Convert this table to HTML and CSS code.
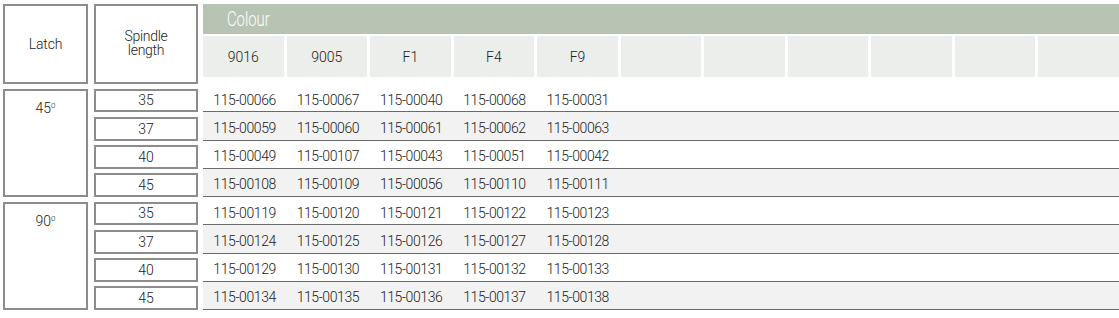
FILE: index.html
```html
<!DOCTYPE html>
<html lang="en">
<head>
<meta charset="utf-8">
<title>Latch spindle colours</title>
<link rel="stylesheet" href="styles.css">
</head>
<body>
<div class="table">
  <div class="box hd-latch">Latch</div>
  <div class="box hd-spindle">Spindle<br>length</div>
  <div class="hd-colour">
    <div class="colour-title"><span class="colour-label">Colour</span></div>
    <div class="colour-cells">
      <div class="cc">9016</div><div class="cc">9005</div><div class="cc">F1</div><div class="cc">F4</div><div class="cc">F9</div>
      <div class="cc"></div><div class="cc"></div><div class="cc"></div><div class="cc"></div><div class="cc"></div><div class="cc"></div>
    </div>
  </div>

  <div class="box latch g1">45<sup>0</sup></div>
  <div class="box spindle">35</div>
  <div class="drow"><span>115-00066</span><span>115-00067</span><span>115-00040</span><span>115-00068</span><span>115-00031</span></div>
  <div class="box spindle">37</div>
  <div class="drow alt"><span>115-00059</span><span>115-00060</span><span>115-00061</span><span>115-00062</span><span>115-00063</span></div>
  <div class="box spindle">40</div>
  <div class="drow"><span>115-00049</span><span>115-00107</span><span>115-00043</span><span>115-00051</span><span>115-00042</span></div>
  <div class="box spindle">45</div>
  <div class="drow alt"><span>115-00108</span><span>115-00109</span><span>115-00056</span><span>115-00110</span><span>115-00111</span></div>

  <div class="box latch g2">90<sup>0</sup></div>
  <div class="box spindle">35</div>
  <div class="drow"><span>115-00119</span><span>115-00120</span><span>115-00121</span><span>115-00122</span><span>115-00123</span></div>
  <div class="box spindle">37</div>
  <div class="drow alt"><span>115-00124</span><span>115-00125</span><span>115-00126</span><span>115-00127</span><span>115-00128</span></div>
  <div class="box spindle">40</div>
  <div class="drow"><span>115-00129</span><span>115-00130</span><span>115-00131</span><span>115-00132</span><span>115-00133</span></div>
  <div class="box spindle">45</div>
  <div class="drow alt"><span>115-00134</span><span>115-00135</span><span>115-00136</span><span>115-00137</span><span>115-00138</span></div>
</div>
</body>
</html>
```
FILE: styles.css
```css
html, body {
  margin: 0;
  padding: 0;
  background: #ffffff;
}
body {
  padding: 4px 0 0 3px;
  font-family: Roboto, "Liberation Sans", sans-serif;
  font-weight: 300;
  font-size: 14px;
  color: #222222;
}
.table {
  display: grid;
  grid-template-columns: 85px 110px 921px;
  grid-template-rows: 80px repeat(8, 28.25px);
}
.box {
  box-sizing: border-box;
  border: 2px solid #8c8c8c;
  background: #fff;
  text-align: center;
}
.hd-latch {
  grid-column: 1;
  grid-row: 1;
  display: flex;
  align-items: center;
  justify-content: center;
  letter-spacing: -0.2px;
}
.hd-spindle {
  grid-column: 2;
  grid-row: 1;
  margin-left: 6px;
  display: flex;
  align-items: center;
  justify-content: center;
  line-height: 14px;
  padding-bottom: 2px;
  letter-spacing: -0.3px;
}
.hd-colour {
  grid-column: 3;
  grid-row: 1;
  margin-left: 5px;
  display: flex;
  flex-direction: column;
}
.colour-title {
  height: 30px;
  background: #b7c4b3;
  color: #ffffff;
  padding-left: 24px;
  line-height: 30px;
}
.colour-label {
  display: inline-block;
  font-size: 20px;
  font-weight: 300;
  transform: scaleX(0.74);
  transform-origin: left center;
}
.colour-cells {
  margin-top: 2px;
  height: 41px;
  display: grid;
  grid-template-columns: repeat(11, 1fr);
  column-gap: 3px;
}
.cc {
  background: #eceeeb;
  display: flex;
  align-items: center;
  justify-content: center;
  padding-top: 1px;
}
.latch {
  grid-column: 1;
  margin-top: 4.5px;
  padding-top: 9px;
  line-height: 16px;
}
.latch sup {
  font-size: 8px;
  vertical-align: 5px;
  line-height: 0;
}
.g1 { grid-row: 2 / span 4; }
.g2 { grid-row: 6 / span 4; }
.spindle {
  grid-column: 2;
  margin-left: 6px;
  margin-top: 4.5px;
  display: flex;
  align-items: center;
  justify-content: center;
}
.drow {
  grid-column: 3;
  margin-left: 5px;
  box-sizing: border-box;
  padding-top: 4px;
  border-bottom: 1px solid #6a6a6a;
  box-shadow: 0 1px 0 #c4c4c4;
  display: grid;
  grid-template-columns: repeat(11, 1fr);
  align-items: center;
  text-align: center;
  background: #ffffff;
  letter-spacing: -0.4px;
}
.drow.alt {
  background: #f2f2f2;
}
```
